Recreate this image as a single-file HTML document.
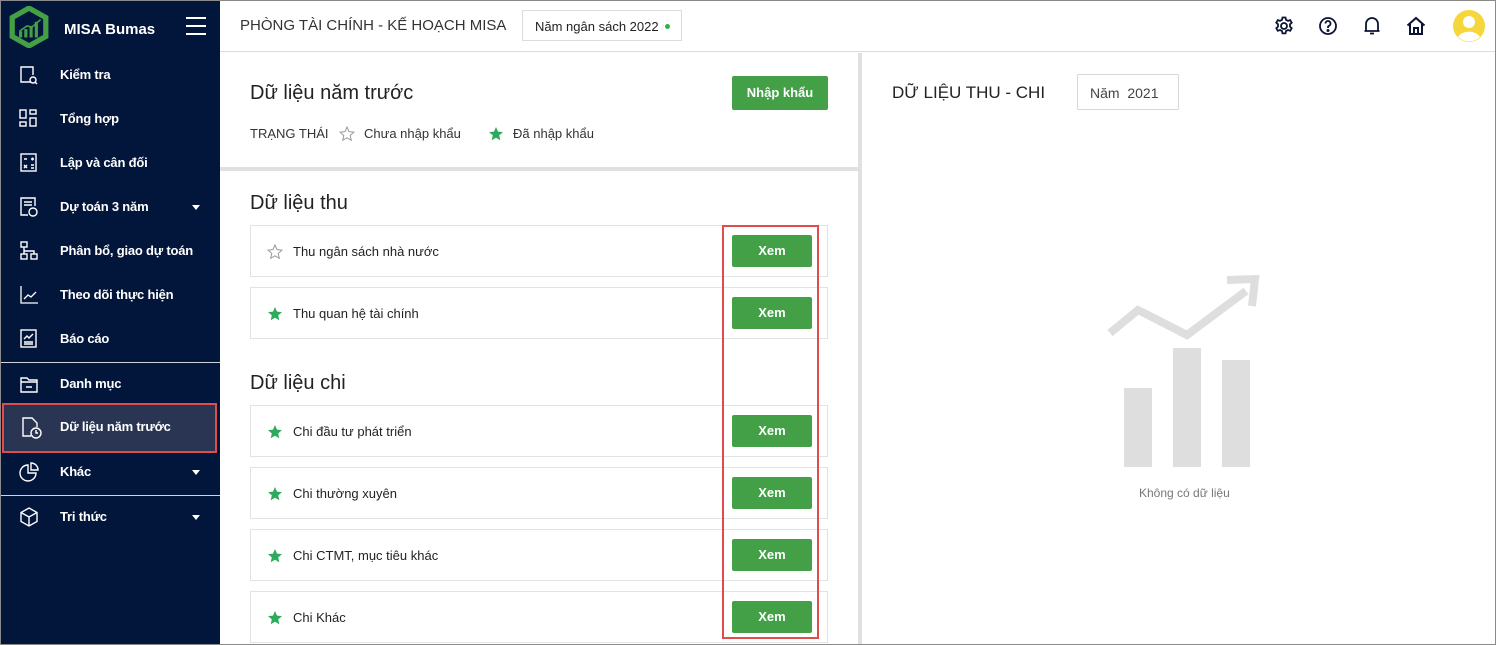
<!DOCTYPE html>
<html><head><meta charset="utf-8"><style>
*{box-sizing:border-box;margin:0;padding:0}
body{width:1496px;height:645px;overflow:hidden;font-family:"Liberation Sans",sans-serif;background:#fff;position:relative;color:#212121}
.frame{position:absolute;inset:0;border:1px solid #8a8a8a;z-index:50;pointer-events:none}
.side{position:absolute;left:0;top:0;width:220px;height:645px;background:#02153a;color:#fff}
.logo{position:absolute;left:9px;top:6px}
.brand{position:absolute;left:64px;top:21px;font-weight:bold;font-size:15px}
.burger{position:absolute;left:186px;top:17px;width:20px}
.burger i{display:block;height:2px;background:#fff;margin-bottom:6px}
.it{position:absolute;left:0;width:220px;height:44px;font-size:13px;font-weight:bold}
.it span{position:absolute;left:60px;top:14px;letter-spacing:-0.2px}
.it svg{position:absolute;left:19px;top:12px}
.caret{position:absolute;left:192px;top:20px;border:4px solid transparent;border-top:5px solid #fff;border-bottom:0}
.sep{position:absolute;left:0;width:220px;height:1px;background:#cfd3da}
.top{position:absolute;left:220px;top:0;right:0;height:52px;border-bottom:1px solid #dcdcdc}
.t1{position:absolute;left:20px;top:17px;font-size:15px;color:#333}
.yr{position:absolute;left:302px;top:10px;width:160px;height:31px;border:1px solid #dcdcdc;font-size:13px;padding:8px 12px;color:#222}
.yr b{position:absolute;right:11px;top:13px;width:5px;height:5px;border-radius:50%;background:#2eb24a}
.hi{position:absolute;top:16px}
.vdiv{position:absolute;left:858px;top:53px;width:4px;height:592px;background:#e0e0e0}
.hdiv{position:absolute;left:220px;top:167px;width:638px;height:4px;background:#e0e0e0}
h2{position:absolute;font-weight:normal;font-size:20px;color:#222}
.btn{position:absolute;background:#43a047;color:#fff;font-size:13px;font-weight:bold;text-align:center;border-radius:2px}
.card{position:absolute;left:250px;width:578px;height:52px;border:1px solid #e2e2e2;font-size:13px;color:#222}
.card span{position:absolute;left:42px;top:18px}
.card svg{position:absolute;left:16px;top:18px}
.card .btn{left:481px;top:9px;width:80px;height:32px;line-height:32px}
</style></head><body>
<div class="side">
<svg class="logo" width="40" height="42" viewBox="0 0 38 40"><path d="M19 2 L35 11 L35 29 L19 38 L3 29 L3 11 Z" fill="none" stroke="#43a047" stroke-width="5"/><path d="M11 30v-6M16 30v-8M21 30v-11M26 30v-15" stroke="#43a047" stroke-width="3"/><path d="M10 24 L17 19 L22 20 L30 13" stroke="#43a047" stroke-width="1.5" fill="none"/></svg>
<div class="brand">MISA Bumas</div>
<div class="burger"><i></i><i></i><i></i></div>
<div class="it" style="top:53px"><svg width="20" height="20" fill="none" stroke="#fff" stroke-width="1.4"><path d="M12 17H2V2h12v8"/><circle cx="14" cy="15" r="3"/><path d="M16 17l2 2"/></svg><span>Kiểm tra</span></div>
<div class="it" style="top:97px"><svg width="20" height="20" fill="none" stroke="#fff" stroke-width="1.4"><rect x="1" y="1" width="6" height="8"/><rect x="11" y="1" width="6" height="4"/><rect x="1" y="13" width="6" height="4"/><rect x="11" y="9" width="6" height="8"/></svg><span>Tổng hợp</span></div>
<div class="it" style="top:141px"><svg width="20" height="20" fill="none" stroke="#fff" stroke-width="1.4"><rect x="2" y="1" width="15" height="17"/><path d="M5 6h3M12 6h3M13.5 4.5v3M5 12l3 3M8 12l-3 3M12 12h3M12 15h3"/></svg><span>Lập và cân đối</span></div>
<div class="it" style="top:185px"><svg width="20" height="20" fill="none" stroke="#fff" stroke-width="1.4"><path d="M9 18H2V1h14v8"/><path d="M5 5h8M5 8h8"/><circle cx="14" cy="15" r="4"/></svg><span>Dự toán 3 năm</span><i class="caret"></i></div>
<div class="it" style="top:229px"><svg width="20" height="20" fill="none" stroke="#fff" stroke-width="1.4"><rect x="2" y="1" width="6" height="5"/><rect x="2" y="13" width="6" height="5"/><rect x="12" y="13" width="6" height="5"/><path d="M5 6v7M5 10h10v3"/></svg><span>Phân bổ, giao dự toán</span></div>
<div class="it" style="top:273px"><svg width="20" height="20" fill="none" stroke="#fff" stroke-width="1.3"><path d="M2 1v17h17"/><path d="M5 14l4-4 3 2 5-5"/></svg><span>Theo dõi thực hiện</span></div>
<div class="it" style="top:317px"><svg width="20" height="20" fill="none" stroke="#fff" stroke-width="1.4"><rect x="2" y="1" width="15" height="17"/><path d="M5 10l3-3 2 2 4-4M5 13h9M5 15h9"/></svg><span>Báo cáo</span></div>
<div class="sep" style="top:362px"></div>
<div class="it" style="top:362px"><svg width="20" height="20" fill="none" stroke="#fff" stroke-width="1.4"><path d="M2 4h6l2 2h8v12H2z"/><path d="M2 8h16M7 13h6"/></svg><span>Danh mục</span></div>
<div class="it" style="background:#293553;outline:2px solid #e04b4b;left:4px;width:211px;top:405px;height:46px"><svg width="22" height="22" fill="none" stroke="#fff" stroke-width="1.4" style="left:17px"><path d="M10 19H2V1h9l5 5v4"/><circle cx="15" cy="16" r="5"/><path d="M15 13v3h2"/></svg><span style="left:56px">Dữ liệu năm trước</span></div>
<div class="it" style="top:450px"><svg width="20" height="20" fill="none" stroke="#fff" stroke-width="1.4"><path d="M9 3a8 8 0 1 0 8 8H9z"/><path d="M12 1a7 7 0 0 1 7 7h-7z"/></svg><span>Khác</span><i class="caret"></i></div>
<div class="sep" style="top:495px"></div>
<div class="it" style="top:495px"><svg width="20" height="20" fill="none" stroke="#fff" stroke-width="1.4"><path d="M10 1l8 4.5v9L10 19l-8-4.5v-9z"/><path d="M2 5.5l8 4.5 8-4.5M10 10v9"/></svg><span>Tri thức</span><i class="caret"></i></div>
</div>

<div class="top">
<div class="t1">PHÒNG TÀI CHÍNH - KẾ HOẠCH MISA</div>
<div class="yr">Năm ngân sách 2022<b></b></div>
<svg class="hi" style="left:1054px" width="20" height="20" fill="none" stroke="#0b1433" stroke-width="1.8"><circle cx="10" cy="10" r="3"/><path d="M8.5 1.5h3l.5 2.3 2 1.1 2.2-.8 1.5 2.6-1.7 1.6v2.3l1.7 1.6-1.5 2.6-2.2-.8-2 1.1-.5 2.3h-3l-.5-2.3-2-1.1-2.2.8-1.5-2.6 1.7-1.6V8.3L2.3 6.7l1.5-2.6 2.2.8 2-1.1z"/></svg>
<svg class="hi" style="left:1098px" width="20" height="20" fill="none" stroke="#0b1433" stroke-width="1.8"><circle cx="10" cy="10" r="8"/><path d="M7.5 7.5a2.5 2.5 0 1 1 3.5 2.3c-.7.3-1 .8-1 1.5v.7"/><circle cx="10" cy="14.5" r=".6" fill="#0b1433"/></svg>
<svg class="hi" style="left:1142px" width="20" height="20" fill="none" stroke="#0b1433" stroke-width="1.8"><path d="M4 15V8a6 6 0 0 1 12 0v7h1.5H2.5z"/><path d="M8 17.5h4"/></svg>
<svg class="hi" style="left:1186px" width="20" height="20" fill="none" stroke="#0b1433" stroke-width="2"><path d="M1.5 9.5L10 2l8.5 7.5M4 8v10h12V8M8 18v-6h4v6"/></svg>
<svg class="hi" style="left:1232px;top:9px" width="34" height="34"><circle cx="17" cy="17" r="16" fill="#f6d63d"/><circle cx="17" cy="13" r="6" fill="#fff"/><path d="M6 28a12 9 0 0 1 22 0 16 16 0 0 1-22 0z" fill="#fff"/></svg>
</div>

<div class="vdiv"></div><div class="hdiv"></div>
<h2 style="left:250px;top:82px">Dữ liệu năm trước</h2>
<div class="btn" style="left:732px;top:76px;width:96px;height:34px;line-height:34px">Nhập khẩu</div>
<div style="position:absolute;left:250px;top:126px;font-size:13px;color:#333">TRẠNG THÁI</div>
<svg style="position:absolute;left:339px;top:126px" width="16" height="16"><path d="M8 1l2 4.6 5 .5-3.8 3.3 1.1 4.9L8 11.8 3.7 14.3l1.1-4.9L1 6.1l5-.5z" fill="none" stroke="#999" stroke-width="1"/></svg>
<div style="position:absolute;left:364px;top:126px;font-size:13px;color:#333">Chưa nhập khẩu</div>
<svg style="position:absolute;left:488px;top:126px" width="16" height="16"><path d="M8 1l2 4.6 5 .5-3.8 3.3 1.1 4.9L8 11.8 3.7 14.3l1.1-4.9L1 6.1l5-.5z" fill="#2eaa5c"/></svg>
<div style="position:absolute;left:513px;top:126px;font-size:13px;color:#333">Đã nhập khẩu</div>

<h2 style="left:250px;top:192px">Dữ liệu thu</h2>
<h2 style="left:250px;top:372px">Dữ liệu chi</h2>

<div class="card" style="top:225px"><svg width="16" height="16"><path d="M8 1l2 4.6 5 .5-3.8 3.3 1.1 4.9L8 11.8 3.7 14.3l1.1-4.9L1 6.1l5-.5z" fill="none" stroke="#999"/></svg><span>Thu ngân sách nhà nước</span><div class="btn">Xem</div></div>
<div class="card" style="top:287px"><svg width="16" height="16"><path d="M8 1l2 4.6 5 .5-3.8 3.3 1.1 4.9L8 11.8 3.7 14.3l1.1-4.9L1 6.1l5-.5z" fill="#2eaa5c"/></svg><span>Thu quan hệ tài chính</span><div class="btn">Xem</div></div>
<div class="card" style="top:405px"><svg width="16" height="16"><path d="M8 1l2 4.6 5 .5-3.8 3.3 1.1 4.9L8 11.8 3.7 14.3l1.1-4.9L1 6.1l5-.5z" fill="#2eaa5c"/></svg><span>Chi đầu tư phát triển</span><div class="btn">Xem</div></div>
<div class="card" style="top:467px"><svg width="16" height="16"><path d="M8 1l2 4.6 5 .5-3.8 3.3 1.1 4.9L8 11.8 3.7 14.3l1.1-4.9L1 6.1l5-.5z" fill="#2eaa5c"/></svg><span>Chi thường xuyên</span><div class="btn">Xem</div></div>
<div class="card" style="top:529px"><svg width="16" height="16"><path d="M8 1l2 4.6 5 .5-3.8 3.3 1.1 4.9L8 11.8 3.7 14.3l1.1-4.9L1 6.1l5-.5z" fill="#2eaa5c"/></svg><span>Chi CTMT, mục tiêu khác</span><div class="btn">Xem</div></div>
<div class="card" style="top:591px"><svg width="16" height="16"><path d="M8 1l2 4.6 5 .5-3.8 3.3 1.1 4.9L8 11.8 3.7 14.3l1.1-4.9L1 6.1l5-.5z" fill="#2eaa5c"/></svg><span>Chi Khác</span><div class="btn">Xem</div></div>
<div style="position:absolute;left:722px;top:225px;width:97px;height:414px;border:2px solid #e04b4b"></div>

<div style="position:absolute;left:892px;top:83px;font-size:17px;color:#222">DỮ LIỆU THU - CHI</div>
<div style="position:absolute;left:1077px;top:74px;width:102px;height:36px;border:1px solid #d6d6d6;border-radius:2px;font-size:14px;color:#444;padding:10px 12px">Năm&nbsp; 2021</div>
<svg style="position:absolute;left:1100px;top:270px" width="170" height="200"><path d="M10 63 L38 40 L87 65 L146 21" fill="none" stroke="#dedede" stroke-width="8"/><path d="M127 10 L155 9 L152 36" fill="none" stroke="#dedede" stroke-width="8"/><rect x="24" y="118" width="28" height="79" fill="#dedede"/><rect x="73" y="78" width="28" height="119" fill="#dedede"/><rect x="122" y="90" width="28" height="107" fill="#dedede"/></svg>
<div style="position:absolute;left:1139px;top:486px;font-size:12px;color:#777">Không có dữ liệu</div>
<div class="frame"></div>
</body></html>
